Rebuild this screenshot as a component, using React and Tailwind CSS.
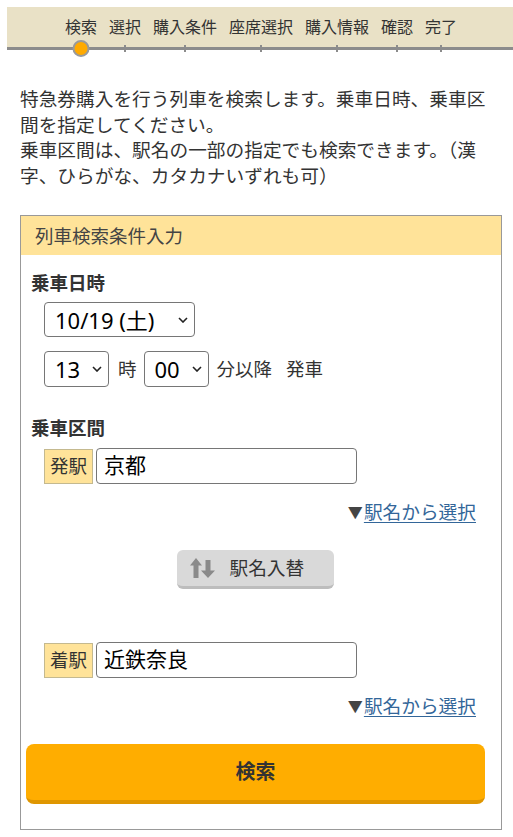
import React from "react";

const STEPS = ["検索", "選択", "購入条件", "座席選択", "購入情報", "確認", "完了"];

const Chevron = () => (
  <svg width="10" height="6" viewBox="0 0 10 6" className="absolute right-[6px] top-1/2 -translate-y-1/2">
    <path d="M1 1 L5 5 L9 1" fill="none" stroke="#222" strokeWidth="1.6" />
  </svg>
);

const FakeSelect = ({ value, width, height }) => (
  <div
    className={`relative flex items-center pl-[10px] border border-[#767676] rounded-[4px] bg-white text-[22px] text-black ${width} ${height}`}
  >
    <span className="leading-none">{value}</span>
    <Chevron />
  </div>
);

const StationRow = ({ label, value }) => (
  <div className="flex items-center ml-[13px]">
    <div className="w-[49px] h-[35px] bg-[#ffe399] border border-[#c4b98f] flex items-center justify-center text-[18.5px] text-[#333]">
      {label}
    </div>
    <div className="ml-[3px] w-[261px] h-[36px] border border-[#767676] rounded-[4px] bg-white flex items-center pl-[7px] text-[21px] text-black">
      {value}
    </div>
  </div>
);

const SelectLink = () => (
  <div className="flex justify-end pr-[9px] leading-[24px] text-[18.7px]">
    <span className="text-[#444] text-[15px] mr-[1px] self-center">▼</span>
    <a href="#" className="text-[#336699] underline underline-offset-[3px]">駅名から選択</a>
  </div>
);

const SwapIcon = () => (
  <svg width="25" height="20" viewBox="0 0 25 20">
    <path d="M6 0 L12 7.5 L8.5 7.5 L8.5 20 L3.5 20 L3.5 7.5 L0 7.5 Z" fill="#8a8a8a" />
    <path d="M15.5 2 L20.5 2 L20.5 12.5 L25 12.5 L18 20 L11 12.5 L15.5 12.5 Z" fill="#8a8a8a" />
  </svg>
);

export default function App() {
  return (
    <div className="min-h-screen bg-white text-[#333]" style={{ fontFamily: '"Noto Sans", "Noto Sans CJK JP", sans-serif' }}>
      {/* progress */}
      <div className="pt-[7px] pl-[7px]">
        <div className="h-[43px] bg-[#e9e1c6] border-b-[3px] border-[#8c8c8c] flex items-center pl-[58px] gap-[12px]">
          {STEPS.map((s, i) => (
            <div key={s} className="relative text-[16px] leading-[20px] text-[#333]">
              {s}
              {i === 0 ? (
                <span className="absolute left-1/2 -translate-x-1/2 top-[23px] w-[17px] h-[17px] rounded-full bg-[#ffaa00] border-2 border-[#9a9a9a]" />
              ) : (
                <span className="absolute left-1/2 -translate-x-1/2 top-[28px] w-[2px] h-[7px] bg-[#8c8c8c]" />
              )}
            </div>
          ))}
        </div>
      </div>

      <p className="mt-[36px] px-[20px] text-[18.7px] leading-[25.5px] text-[#333]">
        特急券購入を行う列車を検索します。乗車日時、乗車区間を指定してください。
        <br />
        乗車区間は、駅名の一部の指定でも検索できます。（漢字、ひらがな、カタカナいずれも可）
      </p>

      <div className="mt-[27px] ml-[20px] w-[482px] border border-[#999]">
        <div className="h-[39px] bg-[#ffe399] pl-[14px] flex items-center text-[18.5px] text-[#444]">
          列車検索条件入力
        </div>
        <div className="pl-[5px] pr-[16px] pt-[16px] pb-[25px]">
          <div className="pl-[5px]">
            <h3 className="font-bold text-[18.5px] leading-[24px] text-[#333]">乗車日時</h3>
            <div className="mt-[7px] ml-[13px]">
              <FakeSelect value="10/19 (土)" width="w-[151px]" height="h-[35px]" />
            </div>
            <div className="mt-[14px] ml-[13px] flex items-center text-[18.5px]">
              <FakeSelect value="13" width="w-[65px]" height="h-[36px]" />
              <span className="ml-[9px]">時</span>
              <div className="ml-[7px]">
                <FakeSelect value="00" width="w-[65px]" height="h-[36px]" />
              </div>
              <span className="ml-[8px]">分以降</span>
              <span className="ml-[14px]">発車</span>
            </div>

            <h3 className="mt-[29px] font-bold text-[18.5px] leading-[24px] text-[#333]">乗車区間</h3>
            <div className="mt-[8px]">
              <StationRow label="発駅" value="京都" />
            </div>
            <div className="mt-[16px]">
              <SelectLink />
            </div>
            <div className="mt-[26px] flex justify-center pr-[6px]">
              <button className="w-[157px] h-[39px] bg-[#d9d9d9] border-b-[3px] border-[#bdbdbd] rounded-[6px] flex items-center pl-[13px] text-[18.7px] text-[#333]">
                <SwapIcon />
                <span className="ml-[15px]">駅名入替</span>
              </button>
            </div>
            <div className="mt-[53px]">
              <StationRow label="着駅" value="近鉄奈良" />
            </div>
            <div className="mt-[16px]">
              <SelectLink />
            </div>
          </div>
          <button className="mt-[26px] w-full h-[60px] bg-[#ffad00] border-b-[4px] border-[#df9600] rounded-[8px] font-bold text-[20px] text-[#333]">
            検索
          </button>
        </div>
      </div>
    </div>
  );
}
